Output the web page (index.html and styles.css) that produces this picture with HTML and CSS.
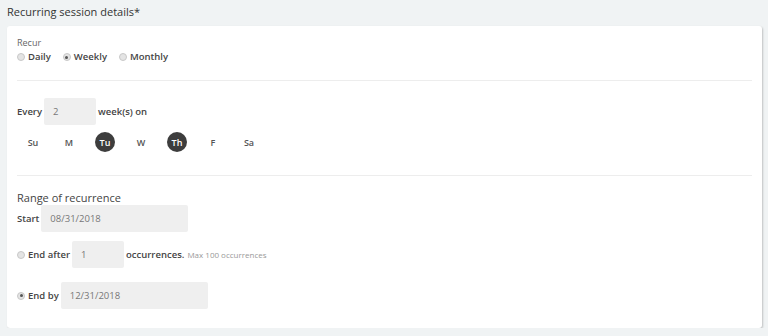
FILE: index.html
```html
<!DOCTYPE html>
<html lang="en">
<head>
    <meta charset="UTF-8">
    <meta name="viewport" content="width=device-width, initial-scale=1.0">
    <title>Recurring session details</title>
    <link rel="stylesheet" href="styles.css">
</head>
<body>

<div class="page">
    <h2 class="title">Recurring session details*</h2>

    <div class="card">
        <div class="section recur">
            <div class="small-label">Recur</div>
            <div class="radio-row">
                <label class="radio"><span class="dot"></span>Daily</label>
                <label class="radio"><span class="dot checked"></span>Weekly</label>
                <label class="radio"><span class="dot"></span>Monthly</label>
            </div>
        </div>

        <div class="section weekly">
            <div class="field-row">
                <span class="field-label">Every</span>
                <div class="input short">2</div>
                <span class="field-label">week(s) on</span>
            </div>
            <div class="days">
                <span class="day">Su</span>
                <span class="day">M</span>
                <span class="day active">Tu</span>
                <span class="day">W</span>
                <span class="day active">Th</span>
                <span class="day">F</span>
                <span class="day">Sa</span>
            </div>
        </div>

        <div class="section range">
            <h3 class="range-title">Range of recurrence</h3>
            <div class="field-row">
                <span class="field-label">Start</span>
                <div class="input date">08/31/2018</div>
            </div>
            <div class="field-row end-after">
                <label class="radio"><span class="dot"></span>End after</label>
                <div class="input short">1</div>
                <span class="field-label">occurrences.</span>
                <span class="hint">Max 100 occurrences</span>
            </div>
            <div class="field-row end-by">
                <label class="radio"><span class="dot checked"></span>End by</label>
                <div class="input date">12/31/2018</div>
            </div>
        </div>
    </div>
</div>

</body>
</html>
```

FILE: styles.css
```css
body {
    font-family: 'Open Sans', 'Liberation Sans', sans-serif;
    margin: 0;
    padding: 0;
    background-color: #f0f3f4;
    color: #444;
}
.page {
    padding: 4px 6px 0 7px;
}
.title {
    margin: 0 0 6px;
    font-size: 11px;
    font-weight: 400;
    line-height: 16px;
    color: #333;
}
.card {
    background: #ffffff;
    border-radius: 3px;
    box-shadow: 1px 1px 2px rgba(0, 0, 0, 0.2);
    padding: 10px 10px 19px;
}
.section {
    border-bottom: 1px solid #ededed;
}
.section:last-child {
    border-bottom: none;
}
.recur {
    padding-bottom: 16px;
}
.small-label {
    font-size: 9px;
    line-height: 14px;
    color: #666;
}
.radio-row {
    display: flex;
    gap: 12px;
}
.radio {
    display: flex;
    align-items: center;
    gap: 3px;
    font-size: 9.5px;
    font-weight: 600;
    line-height: 14px;
    color: #444;
}
.dot {
    width: 6px;
    height: 6px;
    border-radius: 50%;
    border: 1px solid #c8c8c8;
    background: #e4e4e4;
    position: relative;
}
.dot.checked::after {
    content: "";
    position: absolute;
    left: 1.5px;
    top: 1.5px;
    width: 3px;
    height: 3px;
    border-radius: 50%;
    background: #555;
}
.weekly {
    padding: 17px 0 23px;
}
.field-row {
    display: flex;
    align-items: center;
    gap: 2px;
}
.field-label {
    font-size: 9.5px;
    font-weight: 600;
    color: #444;
}
.input {
    height: 27px;
    line-height: 27px;
    background: #efefef;
    border-radius: 2px;
    padding-left: 9px;
    box-sizing: border-box;
    font-size: 9.5px;
    color: #777;
}
.input.short {
    width: 52px;
}
.input.date {
    width: 147px;
}
.days {
    display: flex;
    gap: 16px;
    padding-left: 6px;
    margin-top: 7px;
}
.day {
    width: 20px;
    height: 20px;
    border-radius: 50%;
    display: flex;
    align-items: center;
    justify-content: center;
    font-size: 9px;
    font-weight: 600;
    color: #555;
}
.day.active {
    background: #3d3d3d;
    color: #fff;
}
.range {
    padding-top: 15px;
}
.range-title {
    margin: 0;
    font-size: 11px;
    font-weight: 400;
    line-height: 14px;
    color: #444;
}
.end-after {
    margin-top: 9px;
}
.end-by {
    margin-top: 14px;
}
.hint {
    font-size: 8px;
    color: #999;
    margin-left: 1px;
}
```
